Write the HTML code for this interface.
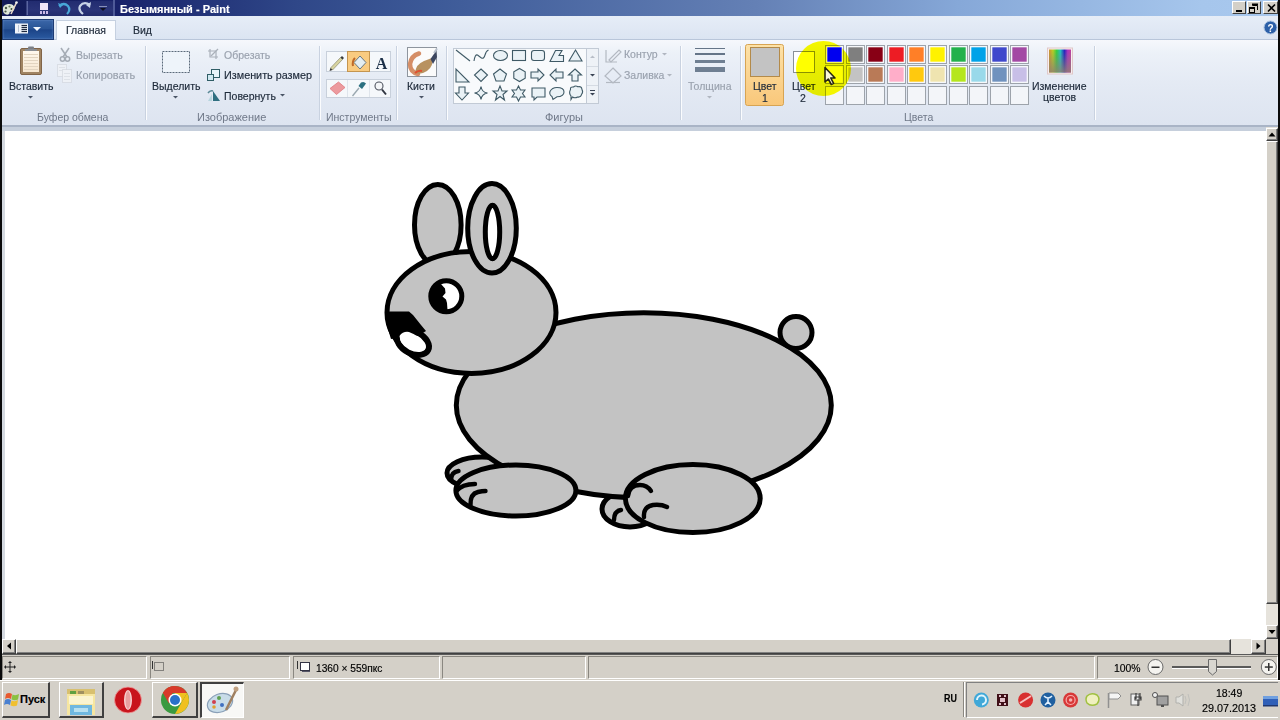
<!DOCTYPE html>
<html><head><meta charset="utf-8">
<style>
*{margin:0;padding:0;box-sizing:border-box}
html,body{width:1280px;height:720px;overflow:hidden;background:#d4d0c8;font-family:"Liberation Sans",sans-serif;}
.a{position:absolute}
.t{position:absolute;font-size:10.5px;line-height:12px;white-space:nowrap;color:#202c3c;-webkit-text-stroke:.15px currentColor}
.g2{color:#9aa2ae}
.rb{background:#d4d0c8;border-top:1px solid #fff;border-left:1px solid #fff;border-right:1px solid #404040;border-bottom:1px solid #404040;box-shadow:inset -1px -1px 0 #808080}
.rb2{background:#d4d0c8;border-top:1px solid #fff;border-left:1px solid #fff;border-right:2px solid #404040;border-bottom:2px solid #404040}
.sp{height:23px;border-top:1px solid #8a8780;border-left:1px solid #8a8780;border-right:1px solid #fff;border-bottom:1px solid #fff}
.sep{width:2px;height:74px;background:linear-gradient(90deg,#c9d2e0 50%,#fbfcfe 50%)}
.lbl{position:absolute;font-size:10.5px;line-height:12px;white-space:nowrap;color:#6f7888}
</style></head><body>
<!-- left/right black strips -->
<div class="a" style="left:0;top:0;width:2px;height:681px;background:#0a0a0a"></div>
<div class="a" style="left:1278px;top:0;width:2px;height:681px;background:#0a0a0a"></div>

<!-- title bar -->
<div class="a" style="left:2px;top:0;width:1276px;height:16px;background:linear-gradient(90deg,#141c58 0%,#18226a 9%,#2f4788 23%,#3d5a98 34%,#6480b5 59%,#86a8d8 75%,#a6c6ec 94%,#a8c8ee 100%)"></div>
<div class="a" style="left:26px;top:1px;width:88px;height:15px;background:linear-gradient(#222c70,#2a3478 60%,#222c6c)"></div>
<div class="a" style="left:26px;top:1px;width:2px;height:14px;background:linear-gradient(90deg,#3a4480 50%,#5a64a0 50%)"></div>
<div class="a" style="left:113px;top:0px;width:2px;height:16px;background:#4e5a98"></div>
<svg class="a" style="left:0;top:0" width="120" height="16">
 <path d="M3 10 Q2 5 8 4 Q14 3.5 14.5 8 Q14.5 11 11 11.5 Q9 11.5 9.5 13.5 Q9 15 6 14.5 Q3 13.5 3 10 Z" fill="#dfe8d8"/>
 <circle cx="6" cy="8" r="1.2" fill="#4a5a48"/><circle cx="9.5" cy="6.5" r="1.1" fill="#6a7a60"/><circle cx="5.5" cy="11.5" r="1.1" fill="#4a5a48"/><circle cx="11.5" cy="9" r="1" fill="#3a4a38"/>
 <path d="M11 14 L16.5 2.5" stroke="#e8d8c8" stroke-width="1.6"/><circle cx="16.5" cy="2.5" r="1.3" fill="#f0f0f0"/>
 <rect x="40" y="3" width="8" height="7" fill="#f0e6fa"/><rect x="40" y="11" width="2" height="3" fill="#c8b8e8"/><rect x="43" y="11" width="2" height="3" fill="#c8b8e8"/><rect x="46" y="11" width="2" height="3" fill="#c8b8e8"/>
 <path d="M59 6 Q64 2 68 6 Q71 10 67 14" stroke="#48a8d8" stroke-width="2.2" fill="none"/><path d="M58 3 L60 8 L63 5 Z" fill="#48a8d8"/>
 <path d="M90 5 Q84 1 80 6 Q78 10 83 14" stroke="#c8d4e8" stroke-width="2.2" fill="none"/><path d="M91 2 L90 8 L86 5 Z" fill="#c8d4e8"/>
 <rect x="99" y="6" width="8" height="1" fill="#8890b8"/><path d="M100 8h6l-3 3z" fill="#101020"/>
</svg>
<div class="t" style="left:120px;top:3px;font-weight:bold;color:#fff;font-size:11px">Безымянный - Paint</div>

<!-- window controls -->
<div class="a" style="left:1232px;top:1px;width:14px;height:13px;background:#d4d0c8;border-top:1px solid #fff;border-left:1px solid #fff;border-right:1px solid #404040;border-bottom:1px solid #404040"></div>
<div class="a" style="left:1247px;top:1px;width:14px;height:13px;background:#d4d0c8;border-top:1px solid #fff;border-left:1px solid #fff;border-right:1px solid #404040;border-bottom:1px solid #404040"></div>
<div class="a" style="left:1263px;top:1px;width:15px;height:13px;background:#d4d0c8;border-top:1px solid #fff;border-left:1px solid #fff;border-right:1px solid #404040;border-bottom:1px solid #404040"></div>

<svg class="a" style="left:1232px;top:1px" width="46" height="14">
 <rect x="4" y="9" width="6" height="2" fill="#000"/>
 <path d="M20.5 4.5h5v4.5" fill="none" stroke="#000" stroke-width="1"/><rect x="20" y="2.5" width="6" height="2" fill="#000"/>
 <rect x="17.5" y="7.5" width="5" height="4" fill="none" stroke="#000" stroke-width="1"/><rect x="17" y="6" width="6" height="2" fill="#000"/>
 <path d="M36 3.5 L43 10.5 M43 3.5 L36 10.5" stroke="#000" stroke-width="1.6"/>
</svg>
<!-- tab row -->
<div class="a" style="left:2px;top:16px;width:1276px;height:24px;background:linear-gradient(#e6edf7,#dbe4f2)"></div>
<div class="a" style="left:2px;top:39px;width:1276px;height:1px;background:#b9c6da"></div>
<div class="a" style="left:2px;top:19px;width:52px;height:21px;background:linear-gradient(#3a66a8,#2a5596 45%,#1c4488 52%,#2a5aa0);border:1px solid #1e3c74;box-shadow:inset 0 0 2px #6a90c8"></div>
<div class="a" style="left:56px;top:20px;width:60px;height:20px;background:#fafcff;border:1px solid #c5d0e0;border-bottom:none"></div>
<div class="t" style="left:66px;top:24px">Главная</div>
<div class="t" style="left:133px;top:24px">Вид</div>
<!-- file button icon -->
<svg class="a" style="left:2px;top:19px" width="52" height="21">
 <rect x="13" y="4.5" width="13" height="10" fill="#f0f4fa"/>
 <g stroke="#1e2a40" stroke-width="1.2"><line x1="19.5" y1="6.5" x2="25" y2="6.5"/><line x1="19.5" y1="8.5" x2="25" y2="8.5"/><line x1="19.5" y1="10.5" x2="25" y2="10.5"/><line x1="19.5" y1="12.5" x2="25" y2="12.5"/></g>
 <g stroke="#b8c4d4" stroke-width="1"><line x1="16.5" y1="6" x2="16.5" y2="13"/></g>
 <path d="M31 8h8l-4 4z" fill="#f4f8ff"/>
</svg>

<!-- ribbon body -->
<div class="a" style="left:2px;top:40px;width:1276px;height:86px;background:linear-gradient(#f6f8fc 0%,#ecf1f8 15%,#e4eaf4 50%,#dde4f0 100%)"></div>
<div class="a" style="left:2px;top:125px;width:1276px;height:2px;background:#a9b4c6"></div>
<div class="a" style="left:2px;top:127px;width:1276px;height:4px;background:#c6cfdc"></div>


<!-- ribbon icons -->
<svg class="a" style="left:0;top:40px" width="1280" height="86" viewBox="0 40 1280 86">
 <defs>
  <linearGradient id="pap" x1="0" y1="0" x2="0" y2="1"><stop offset="0" stop-color="#fff8ee"/><stop offset="1" stop-color="#f6e6cf"/></linearGradient>
  <linearGradient id="rb" x1="0" y1="0" x2="1" y2="0"><stop offset="0" stop-color="#d03010"/><stop offset=".2" stop-color="#f0a000"/><stop offset=".35" stop-color="#40d040"/><stop offset=".55" stop-color="#10a0e0"/><stop offset=".7" stop-color="#2020c0"/><stop offset=".85" stop-color="#b040b0"/><stop offset="1" stop-color="#e04060"/></linearGradient>
  <linearGradient id="rbv" x1="0" y1="0" x2="0" y2="1"><stop offset="0" stop-color="#fff" stop-opacity=".1"/><stop offset="1" stop-color="#808080" stop-opacity=".6"/></linearGradient>
  <linearGradient id="c1" x1="0" y1="0" x2="0" y2="1"><stop offset="0" stop-color="#fde2a8"/><stop offset="1" stop-color="#f9c77a"/></linearGradient>
  <radialGradient id="hl" cx=".5" cy=".5" r=".5"><stop offset="0" stop-color="#ffff00"/><stop offset=".7" stop-color="#f8f400"/><stop offset="1" stop-color="#f4f040" stop-opacity="0"/></radialGradient>
 </defs>
 <!-- clipboard -->
 <rect x="20.5" y="48.5" width="21" height="26" rx="1.5" fill="#a08462" stroke="#806448"/>
 <rect x="23" y="51" width="16" height="21" fill="url(#pap)"/>
 <g stroke="#e2d4c0" stroke-width="1">
  <line x1="24" y1="54.5" x2="38" y2="54.5"/><line x1="24" y1="57.5" x2="38" y2="57.5"/><line x1="24" y1="60.5" x2="38" y2="60.5"/><line x1="24" y1="63.5" x2="38" y2="63.5"/><line x1="24" y1="66.5" x2="38" y2="66.5"/><line x1="24" y1="69.5" x2="38" y2="69.5"/>
 </g>
 <rect x="28" y="46.5" width="6" height="3.5" rx="1" fill="#7b7f86"/><rect x="25" y="49" width="12" height="2" fill="#8a8e94"/>
 <!-- scissors -->
 <g stroke="#a5acb5" stroke-width="1.5" fill="none">
  <line x1="61" y1="48" x2="67" y2="57"/><line x1="69" y1="48" x2="63" y2="57"/>
  <circle cx="62.5" cy="59" r="2.2"/><circle cx="67.5" cy="59" r="2.2"/>
 </g>
 <!-- copy -->
 <g stroke="#c8cdd4" stroke-width="1" fill="#eef1f6" stroke-dasharray="1 1">
  <rect x="57.5" y="64.5" width="9" height="12"/>
  <rect x="62.5" y="69.5" width="9" height="13"/>
 </g>
 <g stroke="#dde1e7" stroke-width="1"><line x1="59" y1="67.5" x2="65" y2="67.5"/><line x1="59" y1="70.5" x2="62" y2="70.5"/><line x1="64" y1="73.5" x2="70" y2="73.5"/><line x1="64" y1="76.5" x2="70" y2="76.5"/><line x1="64" y1="79.5" x2="70" y2="79.5"/></g>
 <!-- select -->
 <rect x="162.5" y="51.5" width="27" height="21" fill="#eef4fa" stroke="#5b6a7a" stroke-dasharray="2 1"/>
 <!-- crop -->
 <g stroke="#a9b0b9" stroke-width="1.2" fill="none"><path d="M210 49v8h8M208 51h8v8"/><line x1="211" y1="56" x2="218" y2="49"/></g>
 <!-- resize -->
 <rect x="211.5" y="69.5" width="8" height="8" fill="#e8f4fa" stroke="#2f5d66"/>
 <rect x="207.5" y="74.5" width="6" height="6" fill="#d0e8f0" stroke="#2f5d66"/>
 <!-- rotate -->
 <path d="M213 91 L220 101 L213 101 Z" fill="#2f6f80"/>
 <path d="M208 93 Q210 90 213 91" stroke="#5a8896" fill="none" stroke-width="1.5"/>
 <path d="M208 101 L212 94 L212 101 Z" fill="#b7d6de"/>
 <!-- tools grid -->
 <rect x="326.5" y="51.5" width="64" height="20" fill="#f5f8fb" stroke="#c8d0db"/>
 <rect x="326.5" y="79.5" width="64" height="18" fill="#f5f8fb" stroke="#c8d0db"/>
 <line x1="347.5" y1="80" x2="347.5" y2="97" stroke="#dfe5ec"/><line x1="369.5" y1="80" x2="369.5" y2="97" stroke="#dfe5ec"/>
 <line x1="369.5" y1="52" x2="369.5" y2="71" stroke="#dfe5ec"/>
 <rect x="347.5" y="51.5" width="22" height="20" fill="#f9cb80" stroke="#c49550"/>
 <!-- pencil -->
 <path d="M330.5 68 L340.5 57.5 L342.5 59.5 L332.5 70 Z" fill="#d8d4a0" stroke="#8a8a70" stroke-width=".7"/>
 <path d="M340.5 57.5 L342 56 L344 58 L342.5 59.5 Z" fill="#3a3a3a"/>
 <path d="M330.5 68 L329.5 71 L332.5 70 Z" fill="#333"/>
 <!-- bucket -->
 <path d="M360 56 L366 62.5 L360 69 L354 62.5 Z" fill="#e4eef2" stroke="#6a7880" stroke-width="1"/>
 <path d="M355 58 Q352 61 353 66" stroke="#c06a28" stroke-width="2" fill="none"/>
 <!-- A -->
 <text x="381.5" y="68.5" font-family="Liberation Serif" font-weight="bold" font-size="16" fill="#1c3048" text-anchor="middle">A</text>
 <!-- eraser -->
 <path d="M330 88.5 L338.5 82 L345 87.5 L336.5 94.5 Z" fill="#ec9a9e" stroke="#e07a80" stroke-width=".8"/>
 <!-- picker -->
 <path d="M361 82.5 Q364 81 366 83.5 L362 89 L358.5 86 Z" fill="#2a6f80"/>
 <line x1="359" y1="88" x2="352.5" y2="96" stroke="#9aa8b0" stroke-width="1.3"/>
 <!-- magnifier -->
 <circle cx="379" cy="86" r="4" fill="#f4f6f8" stroke="#505560" stroke-width="1.1"/>
 <line x1="382" y1="89.5" x2="386" y2="94.5" stroke="#303540" stroke-width="2"/>
 <!-- brushes -->
 <rect x="407.5" y="47.5" width="29" height="29" fill="#fbfbfb" stroke="#8e959e"/>
 <path d="M419 53.5 Q411 56 410 64 Q410 72 418 74" stroke="#c86a36" stroke-width="4.5" fill="none" stroke-linecap="round" opacity=".75"/>
 <path d="M415 73 Q416 64 424 61 L432 58 Q434 66 427 71 Q421 75 415 73 Z" fill="#b89260"/>
 <path d="M415 73 Q418 70 422 71" stroke="#e05030" stroke-width="2" fill="none"/>
 <path d="M430.5 59 L436 51 L437 57 L433 64 Z" fill="#3c4660"/>
 <path d="M434 53 L437 48.5" stroke="#b8c0cc" stroke-width="2"/>
 <!-- arrows -->
 <g fill="#4a5566">
  <path d="M28 96h5l-2.5 2.5z"/><path d="M173 96h5l-2.5 2.5z"/><path d="M280 94h5l-2.5 2.5z"/>
  <path d="M419 96h5l-2.5 2.5z"/>
 </g>
 <g fill="#b0b6c0"><path d="M707 96h5l-2.5 2.5z"/><path d="M662 53h5l-2.5 2.5z"/><path d="M667 74h5l-2.5 2.5z"/></g>
 <!-- shapes gallery -->
 <rect x="453.5" y="48.5" width="145" height="55" fill="#f8fafc" stroke="#c2cad5"/>
 <rect x="586.5" y="48.5" width="12" height="55" fill="#eef2f7" stroke="#c2cad5"/>
 <line x1="587" y1="66.5" x2="598" y2="66.5" stroke="#d5dbe3"/><line x1="587" y1="85.5" x2="598" y2="85.5" stroke="#d5dbe3"/>
 <path d="M590 58h5l-2.5-2.5z" fill="#b8bec8"/>
 <path d="M590 74h5l-2.5 2.5z" fill="#3a4455"/>
 <path d="M590 93h5l-2.5 2.5z" fill="#3a4455"/><line x1="590" y1="90.5" x2="595" y2="90.5" stroke="#3a4455"/>
 <g stroke="#3f5a66" stroke-width="1.1" fill="#eaf2f6">
  <line x1="456" y1="50" x2="470" y2="61" fill="none"/>
  <path d="M474 61 Q475 54 477.5 55 Q480 57 481.5 58 Q484 59 485 55 Q486 51 488.5 50" fill="none"/>
  <ellipse cx="500.5" cy="55.5" rx="7" ry="5"/>
  <rect x="512.5" y="50.5" width="13" height="10"/>
  <rect x="531.5" y="50.5" width="13" height="10" rx="2.5"/>
  <path d="M550 61.5 L555.5 50.5 L562 50.5 L559 55.5 L563.5 55.5 L563.5 61.5 Z"/>
  <path d="M575.5 50 L582 61 L569 61 Z"/>
  <path d="M456 69 L456 82 L469 82 Z"/>
  <path d="M481 69 L487.5 75 L481 81.5 L474.5 75 Z"/>
  <path d="M500 69 L506.5 74 L504 81 L496 81 L493.5 74 Z"/>
  <path d="M519.5 68.5 L525.2 71.8 L525.2 78.2 L519.5 81.5 L513.8 78.2 L513.8 71.8 Z"/>
  <path d="M531 72 L538 72 L538 69 L544 75 L538 81 L538 78 L531 78 Z"/>
  <path d="M563 72 L556 72 L556 69 L550 75 L556 81 L556 78 L563 78 Z"/>
  <path d="M575 69 L581.5 75 L578 75 L578 81 L572 81 L572 75 L568.5 75 Z"/>
  <path d="M459 87 L465 87 L465 93 L468.5 93 L462 100 L455.5 93 L459 93 Z"/>
  <path d="M481 86.5 Q481.8 92.2 487.5 93 Q481.8 93.8 481 99.5 Q480.2 93.8 474.5 93 Q480.2 92.2 481 86.5 Z"/>
  <path d="M500 86 L502 91 L507 91 L503 94.5 L504.5 100 L500 96.5 L495.5 100 L497 94.5 L493 91 L498 91 Z"/>
  <path d="M518.5 86 L520.5 90 L525 90 L522.5 93.5 L525 97 L520.5 97 L518.5 101 L516.5 97 L512 97 L514.5 93.5 L512 90 L516.5 90 Z"/>
  <path d="M532 88 h13 v9 h-8 l-3 3 v-3 h-2 z" />
  <path d="M552 96.5 Q549 94.5 550 91.5 Q552 87.5 557 87.5 Q564 87.5 564 92 Q564 96.5 557 96.8 L553 99.5 Z"/>
  <path d="M570.5 89.5 Q570 86.5 573.5 87 Q575.5 85 578 86.8 Q581.5 86 582 89.5 Q583.5 92 581.5 94.5 Q581 97.5 577.5 97 Q575 98.5 572.5 97 L571 99.5 L571 96 Q568.5 93 570.5 89.5 Z"/>
 </g>
 <!-- outline / fill -->
 <g stroke="#b3b9c2" stroke-width="1.2" fill="none">
  <path d="M606 50 L606 62 L617 62"/><path d="M609 60 L619 50 L621 52 L611 62 Z"/>
  <path d="M613 68 L621 76 L613 83 L605 76 Z"/><line x1="606" y1="82.5" x2="620" y2="82.5"/>
 </g>
 <!-- thickness -->
 <rect x="695" y="48" width="30" height="1" fill="#657588"/>
 <rect x="695" y="53" width="30" height="2" fill="#657588"/>
 <rect x="695" y="60" width="30" height="3" fill="#6f7f92"/>
 <rect x="695" y="67" width="30" height="5" fill="#6f7f92"/>
 <!-- color1 -->
 <rect x="745.5" y="44.5" width="38" height="61" rx="2" fill="url(#c1)" stroke="#d7a453"/>
 <rect x="750.5" y="47.5" width="29" height="29" fill="#c3c3c3" stroke="#b38a4a"/>
 <!-- color2 -->
 <rect x="793.5" y="51.5" width="21" height="21" fill="#fff" stroke="#8a9098"/>
</svg>

<!-- palette -->
<svg class="a" style="left:0;top:40px" width="1280" height="86" viewBox="0 40 1280 86">
 <defs>
  <linearGradient id="rb2" x1="0" y1="0" x2="1" y2="0"><stop offset="0" stop-color="#d09030"/><stop offset=".18" stop-color="#b8d020"/><stop offset=".35" stop-color="#30d040"/><stop offset=".52" stop-color="#20c0c0"/><stop offset=".7" stop-color="#2020c0"/><stop offset=".85" stop-color="#b030c0"/><stop offset="1" stop-color="#c040a0"/></linearGradient>
  <linearGradient id="gv" x1="0" y1="0" x2="0" y2="1"><stop offset="0" stop-color="#808080" stop-opacity="0"/><stop offset="1" stop-color="#908070" stop-opacity=".85"/></linearGradient>
  <radialGradient id="hl2" cx=".5" cy=".5" r=".5"><stop offset="0" stop-color="#ffff00"/><stop offset=".75" stop-color="#ffff00"/><stop offset="1" stop-color="#ffff00" stop-opacity="0"/></radialGradient>
 </defs>
 <rect x="825.5" y="45.5" width="18" height="18" fill="#f3f5f9" stroke="#9da3ab"/>
 <rect x="827" y="47" width="15" height="15" fill="#0000f0" stroke="#fff" stroke-width=".6"/>
 <rect x="846.5" y="45.5" width="18" height="18" fill="#f3f5f9" stroke="#9da3ab"/>
 <rect x="848" y="47" width="15" height="15" fill="#7f7f7f" stroke="#fff" stroke-width=".6"/>
 <rect x="866.5" y="45.5" width="18" height="18" fill="#f3f5f9" stroke="#9da3ab"/>
 <rect x="868" y="47" width="15" height="15" fill="#880015" stroke="#fff" stroke-width=".6"/>
 <rect x="887.5" y="45.5" width="18" height="18" fill="#f3f5f9" stroke="#9da3ab"/>
 <rect x="889" y="47" width="15" height="15" fill="#ed1c24" stroke="#fff" stroke-width=".6"/>
 <rect x="907.5" y="45.5" width="18" height="18" fill="#f3f5f9" stroke="#9da3ab"/>
 <rect x="909" y="47" width="15" height="15" fill="#ff7f27" stroke="#fff" stroke-width=".6"/>
 <rect x="928.5" y="45.5" width="18" height="18" fill="#f3f5f9" stroke="#9da3ab"/>
 <rect x="930" y="47" width="15" height="15" fill="#fff200" stroke="#fff" stroke-width=".6"/>
 <rect x="949.5" y="45.5" width="18" height="18" fill="#f3f5f9" stroke="#9da3ab"/>
 <rect x="951" y="47" width="15" height="15" fill="#22b14c" stroke="#fff" stroke-width=".6"/>
 <rect x="969.5" y="45.5" width="18" height="18" fill="#f3f5f9" stroke="#9da3ab"/>
 <rect x="971" y="47" width="15" height="15" fill="#00a2e8" stroke="#fff" stroke-width=".6"/>
 <rect x="990.5" y="45.5" width="18" height="18" fill="#f3f5f9" stroke="#9da3ab"/>
 <rect x="992" y="47" width="15" height="15" fill="#3f48cc" stroke="#fff" stroke-width=".6"/>
 <rect x="1010.5" y="45.5" width="18" height="18" fill="#f3f5f9" stroke="#9da3ab"/>
 <rect x="1012" y="47" width="15" height="15" fill="#a349a4" stroke="#fff" stroke-width=".6"/>
 <rect x="825.5" y="65.5" width="18" height="18" fill="#f3f5f9" stroke="#9da3ab"/>
 <rect x="827" y="67" width="15" height="15" fill="#ffffff" stroke="#fff" stroke-width=".6"/>
 <rect x="846.5" y="65.5" width="18" height="18" fill="#f3f5f9" stroke="#9da3ab"/>
 <rect x="848" y="67" width="15" height="15" fill="#c3c3c3" stroke="#fff" stroke-width=".6"/>
 <rect x="866.5" y="65.5" width="18" height="18" fill="#f3f5f9" stroke="#9da3ab"/>
 <rect x="868" y="67" width="15" height="15" fill="#b97a57" stroke="#fff" stroke-width=".6"/>
 <rect x="887.5" y="65.5" width="18" height="18" fill="#f3f5f9" stroke="#9da3ab"/>
 <rect x="889" y="67" width="15" height="15" fill="#ffaec9" stroke="#fff" stroke-width=".6"/>
 <rect x="907.5" y="65.5" width="18" height="18" fill="#f3f5f9" stroke="#9da3ab"/>
 <rect x="909" y="67" width="15" height="15" fill="#ffc90e" stroke="#fff" stroke-width=".6"/>
 <rect x="928.5" y="65.5" width="18" height="18" fill="#f3f5f9" stroke="#9da3ab"/>
 <rect x="930" y="67" width="15" height="15" fill="#efe4b0" stroke="#fff" stroke-width=".6"/>
 <rect x="949.5" y="65.5" width="18" height="18" fill="#f3f5f9" stroke="#9da3ab"/>
 <rect x="951" y="67" width="15" height="15" fill="#b5e61d" stroke="#fff" stroke-width=".6"/>
 <rect x="969.5" y="65.5" width="18" height="18" fill="#f3f5f9" stroke="#9da3ab"/>
 <rect x="971" y="67" width="15" height="15" fill="#99d9ea" stroke="#fff" stroke-width=".6"/>
 <rect x="990.5" y="65.5" width="18" height="18" fill="#f3f5f9" stroke="#9da3ab"/>
 <rect x="992" y="67" width="15" height="15" fill="#7092be" stroke="#fff" stroke-width=".6"/>
 <rect x="1010.5" y="65.5" width="18" height="18" fill="#f3f5f9" stroke="#9da3ab"/>
 <rect x="1012" y="67" width="15" height="15" fill="#c8bfe7" stroke="#fff" stroke-width=".6"/>
 <rect x="825.5" y="86.5" width="18" height="18" fill="#f3f5f9" stroke="#9da3ab"/>
 <rect x="846.5" y="86.5" width="18" height="18" fill="#f3f5f9" stroke="#9da3ab"/>
 <rect x="866.5" y="86.5" width="18" height="18" fill="#f3f5f9" stroke="#9da3ab"/>
 <rect x="887.5" y="86.5" width="18" height="18" fill="#f3f5f9" stroke="#9da3ab"/>
 <rect x="907.5" y="86.5" width="18" height="18" fill="#f3f5f9" stroke="#9da3ab"/>
 <rect x="928.5" y="86.5" width="18" height="18" fill="#f3f5f9" stroke="#9da3ab"/>
 <rect x="949.5" y="86.5" width="18" height="18" fill="#f3f5f9" stroke="#9da3ab"/>
 <rect x="969.5" y="86.5" width="18" height="18" fill="#f3f5f9" stroke="#9da3ab"/>
 <rect x="990.5" y="86.5" width="18" height="18" fill="#f3f5f9" stroke="#9da3ab"/>
 <rect x="1010.5" y="86.5" width="18" height="18" fill="#f3f5f9" stroke="#9da3ab"/>
 <rect x="1047.5" y="48" width="25" height="26" fill="#f8f0f0" stroke="#e0c8c8"/>
 <rect x="1049" y="49.5" width="22" height="23" fill="url(#rb2)"/>
 <rect x="1049" y="49.5" width="22" height="23" fill="url(#gv)"/>
 </svg>
<svg class="a" style="left:1263px;top:20px" width="15" height="15">
 <circle cx="7.5" cy="7.5" r="6.5" fill="#2b5fa8" stroke="#a8c0e0" stroke-width="1"/>
 <text x="7.5" y="11.5" font-family="Liberation Sans" font-weight="bold" font-size="10" fill="#fff" text-anchor="middle">?</text>
</svg>

<!-- ribbon labels -->
<div class="t" style="left:9px;top:80px">Вставить</div>
<div class="t g2" style="left:76px;top:48.5px">Вырезать</div>
<div class="t g2" style="left:76px;top:69px;font-size:11px">Копировать</div>
<div class="lbl" style="left:37px;top:111px">Буфер обмена</div>
<div class="a sep" style="left:145px;top:46px"></div>

<div class="t" style="left:152px;top:80px">Выделить</div>
<div class="t g2" style="left:224px;top:49px">Обрезать</div>
<div class="t" style="left:224px;top:69px;font-size:10.8px">Изменить размер</div>
<div class="t" style="left:224px;top:90px">Повернуть</div>
<div class="lbl" style="left:197px;top:111px;font-size:11px">Изображение</div>
<div class="a sep" style="left:319px;top:46px"></div>

<div class="lbl" style="left:326px;top:111px">Инструменты</div>
<div class="a sep" style="left:396px;top:46px"></div>
<div class="t" style="left:407px;top:80px">Кисти</div>
<div class="a sep" style="left:446px;top:46px"></div>

<div class="t g2" style="left:624px;top:48px">Контур</div>
<div class="t g2" style="left:624px;top:69px">Заливка</div>
<div class="lbl" style="left:545px;top:111px;font-size:11px">Фигуры</div>
<div class="a sep" style="left:680px;top:46px"></div>
<div class="t g2" style="left:688px;top:80px">Толщина</div>
<div class="a sep" style="left:740px;top:46px"></div>

<div class="t" style="left:753px;top:80px">Цвет</div>
<div class="t" style="left:762px;top:92px">1</div>
<div class="t" style="left:792px;top:80px">Цвет</div>
<div class="t" style="left:800px;top:92px">2</div>
<div class="lbl" style="left:904px;top:111px">Цвета</div>
<div class="t" style="left:1032px;top:80px">Изменение</div>
<div class="t" style="left:1043px;top:91px">цветов</div>
<div class="a sep" style="left:1094px;top:46px"></div>



<!-- highlight -->
<div class="a" style="left:796px;top:41px;width:55px;height:55px;border-radius:50%;background:radial-gradient(circle,#ffff00 0%,#ffff00 72%,rgba(255,255,0,0) 100%);mix-blend-mode:multiply"></div>
<svg class="a" style="left:0;top:40px" width="1280" height="86" viewBox="0 40 1280 86">
 <rect x="827" y="47" width="15" height="15" fill="#0000f0" stroke="#fff" stroke-width=".6"/>
 <path d="M825 67.5 L825 82 L828.3 79 L831.3 84.5 L833.6 83.4 L830.8 78 L835 78 Z" fill="#fbf8d8" stroke="#2a2810" stroke-width="1.6" stroke-linejoin="round"/>
</svg>

<!-- canvas area -->
<div class="a" style="left:2px;top:131px;width:3px;height:508px;background:#d4d9e0"></div>
<div class="a" style="left:5px;top:131px;width:1261px;height:508px;background:#fff"></div>

<!-- bunny -->
<svg class="a" style="left:0;top:0" width="1280" height="720">
 <g stroke="#000" stroke-width="5" fill="#c3c3c3">
  <!-- back paws -->
  <ellipse cx="482" cy="473" rx="35" ry="16"/>
  <ellipse cx="630" cy="509" rx="28" ry="18"/>
  <!-- body -->
  <ellipse cx="643.8" cy="405.3" rx="187.5" ry="92.5"/>
  <!-- tail -->
  <circle cx="796" cy="332.5" r="16"/>
  <!-- left ear -->
  <ellipse cx="437.8" cy="225" rx="23.3" ry="40.5"/>
  <!-- head -->
  <ellipse cx="471.5" cy="312.4" rx="84.5" ry="61"/>
  <!-- right ear -->
  <ellipse cx="492" cy="228.3" rx="24.3" ry="44.7"/>
  <ellipse cx="492.5" cy="232" rx="7.2" ry="26.8" fill="#fff"/>
  <!-- legs -->
  <ellipse cx="515.9" cy="490.5" rx="60" ry="25.5"/>
  <ellipse cx="692.8" cy="498.6" rx="67.4" ry="34"/>
 </g>
 <!-- eye -->
 <circle cx="446.3" cy="296.2" r="15.5" fill="#fff" stroke="#000" stroke-width="5"/>
 <path d="M446.3 280.7 A15.5 15.5 0 0 0 446.3 311.7 L447.5 310 L447 303 L446 299.5 L442.5 296.5 L445.5 293 L445 288.5 L440.5 283.5 Z" fill="#000"/>
 <!-- nose & mouth -->
 <ellipse cx="413" cy="342.5" rx="17" ry="11" transform="rotate(27 413 342.5)" fill="#fff" stroke="#000" stroke-width="6"/>
 <path d="M386 311.5 L409 311.5 L413 315 L417 320 L421 325 L426 331 L418 336 L405 334 L397 338 L391 339 L387 326 Z" fill="#000"/>
 <path d="M399.5 336 Q403 331 409 332 Q420 336 425 344 Q427 350 421 351 Q412 351 405 346 Q400 342 399.5 336 Z" fill="#fff"/>
 <!-- toes -->
 <g stroke="#000" stroke-width="4.4" fill="none" stroke-linecap="round">
  <path d="M451 480 Q451 472 458.5 471"/>
  <path d="M456.5 491 Q462 484 475 484"/>
  <path d="M470.5 505 Q470 494 478 492 Q482 491 485.5 491"/>
  <path d="M614 520 Q614 511 621 510"/>
  <path d="M628 496 Q629 485 640 485 Q647 485 651 491"/>
  <path d="M644 517 Q643 507 653 505 Q661 504 667 507"/>
 </g>
</svg>

<!-- vertical scrollbar -->
<div class="a" style="left:1266px;top:127px;width:12px;height:512px;background:#e6e3dc"></div>
<div class="a rb" style="left:1266px;top:128px;width:12px;height:13px"></div>
<svg class="a" style="left:1266px;top:128px" width="12" height="13"><path d="M2.5 8.5h7l-3.5-4z" fill="#000"/></svg>
<div class="a rb" style="left:1266px;top:141px;width:12px;height:463px"></div>
<div class="a rb" style="left:1266px;top:625px;width:12px;height:14px"></div>
<svg class="a" style="left:1266px;top:625px" width="12" height="14"><path d="M2.5 5h7l-3.5 4z" fill="#000"/></svg>

<!-- horizontal scrollbar -->
<div class="a" style="left:2px;top:639px;width:1264px;height:15px;background:#e6e3dc"></div>
<div class="a rb" style="left:2px;top:639px;width:14px;height:15px"></div>
<svg class="a" style="left:2px;top:639px" width="14" height="15"><path d="M9 3.5v7l-4-3.5z" fill="#000"/></svg>
<div class="a rb" style="left:16px;top:639px;width:1215px;height:15px"></div>
<div class="a rb" style="left:1251px;top:639px;width:15px;height:15px"></div>
<svg class="a" style="left:1251px;top:639px" width="15" height="15"><path d="M5.5 3.5v7l4-3.5z" fill="#000"/></svg>
<div class="a" style="left:1266px;top:639px;width:12px;height:15px;background:#d4d0c8"></div>

<!-- status bar -->
<div class="a" style="left:2px;top:654px;width:1276px;height:26px;background:#d4d0c8;border-top:1px solid #5a5a5a"></div>
<div class="a sp" style="left:2px;top:656px;width:145px"></div>
<div class="a sp" style="left:150px;top:656px;width:140px"></div>
<div class="a sp" style="left:293px;top:656px;width:147px"></div>
<div class="a sp" style="left:442px;top:656px;width:144px"></div>
<div class="a sp" style="left:588px;top:656px;width:507px"></div>
<div class="a sp" style="left:1097px;top:656px;width:181px"></div>
<svg class="a" style="left:0;top:654px" width="400" height="26">
 <g fill="#222"><rect x="9.5" y="8" width="1" height="10"/><rect x="5" y="12.5" width="10" height="1"/><path d="M10 7l-2 2h4z M10 19l-2-2h4z M4 13l2-2v4z M16 13l-2-2v4z"/></g>
 <g fill="none" stroke="#333" stroke-width="1"><rect x="154.5" y="8.5" width="9" height="8" stroke-dasharray="1 1"/><line x1="152.5" y1="7" x2="152.5" y2="15"/></g>
 <g><rect x="300.5" y="8.5" width="9" height="8" fill="#fff" stroke="#334"/><line x1="297.5" y1="7" x2="297.5" y2="15" stroke="#333"/><rect x="302" y="17" width="8" height="1" fill="#556"/></g>
</svg>
<div class="t" style="left:316px;top:663px;font-size:10.2px;color:#000">1360 × 559пкс</div>
<div class="t" style="left:1114px;top:662.5px;font-size:10.4px;color:#000">100%</div>
<svg class="a" style="left:1140px;top:654px" width="140" height="26">
 <circle cx="15.5" cy="13" r="7.5" fill="#f4f3ef" stroke="#6a6a6a"/><rect x="11.5" y="12.5" width="8" height="1.5" fill="#333"/>
 <rect x="32" y="12" width="79" height="2" fill="#5a5a5a"/><rect x="32" y="14" width="79" height="1" fill="#fff"/>
 <path d="M68.5 5.5h8v12l-4 3.5l-4-3.5z" fill="#d8d6d0" stroke="#6a6a6a"/>
 <circle cx="128.8" cy="13" r="7.5" fill="#f4f3ef" stroke="#6a6a6a"/><rect x="124.8" y="12.3" width="8" height="1.5" fill="#333"/><rect x="128" y="9" width="1.5" height="8" fill="#333"/>
</svg>

<!-- taskbar -->
<div class="a" style="left:0;top:680px;width:1280px;height:40px;background:#d4d0c8;border-top:1px solid #fff"></div>
<div class="a rb2" style="left:2px;top:682px;width:48px;height:36px"></div>
<div class="t" style="left:20px;top:693px;font-size:11px;font-weight:bold;color:#000">Пуск</div>
<svg class="a" style="left:4px;top:691px" width="16" height="17">
 <path d="M2 3 Q5 1 8 3 L7 8 Q4 6 1 8 Z" fill="#e85a30"/><path d="M8.5 3.5 Q11.5 5 15 3 L14 8.5 Q11 10 7.5 8.5 Z" fill="#8ac040"/>
 <path d="M1 9 Q4 7 7 9 L6 14 Q3 12 0 14 Z" fill="#4a80d0"/><path d="M7.5 9.5 Q11 11 14 9 L13 14.5 Q10 16 6.5 14.5 Z" fill="#f0c030"/>
</svg>
<div class="a rb2" style="left:59px;top:682px;width:45px;height:36px"></div>
<svg class="a" style="left:59px;top:682px" width="45" height="36">
 <rect x="8" y="7" width="28" height="26" fill="#f6e6a0"/><rect x="8" y="7" width="28" height="5" fill="#d8c070"/>
 <rect x="11" y="9" width="6" height="3" fill="#60a040"/><rect x="19" y="9" width="6" height="3" fill="#a09060"/>
 <rect x="10" y="14" width="24" height="8" fill="#fbf4d0"/>
 <rect x="11" y="23" width="22" height="10" fill="#70b8e0"/><rect x="15" y="26" width="14" height="4" fill="#b8e0f0"/>
</svg>
<svg class="a" style="left:112px;top:685px" width="32" height="30">
 <ellipse cx="16" cy="15" rx="13.5" ry="13" fill="#c8141c"/>
 <ellipse cx="16" cy="15" rx="13.5" ry="13" fill="none" stroke="#f0a0a0" stroke-width=".8"/>
 <ellipse cx="16" cy="15" rx="4" ry="10" fill="#f8d0d0"/><ellipse cx="16" cy="15" rx="2.5" ry="9" fill="#e8a0a0"/>
</svg>
<div class="a rb2" style="left:152px;top:682px;width:46px;height:36px"></div>
<svg class="a" style="left:152px;top:682px" width="46" height="36">
 <circle cx="23" cy="18" r="14" fill="#3a9a40"/>
 <path d="M23 4 A14 14 0 0 1 35.1 11 L23 11 Z M10.9 11 A14 14 0 0 1 23 4 L23 11 Z" fill="#d83a2a"/>
 <path d="M23 4 A14 14 0 0 0 10.9 11 L17 21.5 Z" fill="#d83a2a"/>
 <path d="M35.1 11 A14 14 0 0 1 23 32 L29 21.5 Z" fill="#f0c020"/>
 <path d="M35.1 11 L23 11 L29 21.5 Z" fill="#f0c020"/>
 <circle cx="23" cy="18" r="6.5" fill="#fff"/><circle cx="23" cy="18" r="5" fill="#2a70c8"/>
</svg>
<div class="a" style="left:200px;top:682px;width:44px;height:36px;background:#f8f8f6;border-top:2px solid #404040;border-left:2px solid #404040;border-right:1px solid #fff;border-bottom:1px solid #fff"></div>
<svg class="a" style="left:200px;top:682px" width="44" height="36">
 <ellipse cx="20" cy="21" rx="13" ry="9" fill="#c8dce8" stroke="#8aa0b8" stroke-width="1.2" transform="rotate(-20 20 21)"/>
 <circle cx="14" cy="20" r="2" fill="#d04050"/><circle cx="19" cy="16" r="2" fill="#60a050"/><circle cx="22" cy="23" r="2" fill="#4070c0"/><circle cx="14" cy="25" r="1.8" fill="#e0a030"/>
 <line x1="26" y1="28" x2="36" y2="8" stroke="#a08060" stroke-width="2.5"/>
 <circle cx="36" cy="7" r="2.5" fill="#c0a080"/>
</svg>

<div class="t" style="left:944px;top:692px;font-size:10.5px;color:#000;font-weight:bold;transform:scaleX(.85);transform-origin:left">RU</div>
<div class="a" style="left:963px;top:682px;width:2px;height:35px;background:linear-gradient(90deg,#8a8780 50%,#fff 50%)"></div>
<div class="a" style="left:966px;top:682px;width:312px;height:36px;border-top:1px solid #808080;border-left:1px solid #808080;border-bottom:1px solid #fff"></div>
<svg class="a" style="left:960px;top:682px" width="320" height="36">
 <circle cx="21.3" cy="18" r="7.5" fill="#40a8d8"/><path d="M17 18 A4.5 4.5 0 1 1 22 22.5" stroke="#e0f4fc" stroke-width="2" fill="none"/>
 <rect x="37" y="12" width="11" height="12" fill="#401018"/><g fill="#e0c0c8"><rect x="39" y="13" width="2" height="2"/><rect x="44" y="13" width="2" height="2"/><rect x="39" y="21" width="2" height="2"/><rect x="44" y="21" width="2" height="2"/><rect x="40" y="16" width="5" height="4"/></g>
 <circle cx="65.6" cy="18" r="7.5" fill="#d83030"/><path d="M60 21 L71 14" stroke="#f8c0c0" stroke-width="2"/>
 <circle cx="88" cy="18" r="7.5" fill="#2060a0"/><path d="M84 14 Q88 18 92 14 M88 16v6 M85 23 L88 20 L91 23" stroke="#e0f0ff" stroke-width="1.6" fill="none"/>
 <circle cx="110.6" cy="18" r="7.5" fill="#d83838"/><circle cx="110.6" cy="18" r="4.5" fill="none" stroke="#f8b0b0" stroke-width="1.2"/><circle cx="110.6" cy="18" r="1.8" fill="#f8b0b0"/>
 <path d="M127 14 Q131 10 137 13 Q141 17 137 22 Q131 25 127 21 Q125 17 127 14 Z" fill="#f0f0c0" stroke="#a0c040" stroke-width="1.5"/>
 <path d="M148.5 11v15" stroke="#909090" stroke-width="1.5"/><path d="M149 11 h9 l3 3 l-3 3 h-9 z" fill="#f4f4f4" stroke="#909090"/>
 <rect x="171" y="12" width="8" height="11" fill="#f0f0f0" stroke="#606060"/><path d="M176 11v6 M180 11v6 M175 15h6v3h-6z M178 18v6" stroke="#404040" stroke-width="1.2" fill="none"/>
 <rect x="197" y="14" width="11" height="9" fill="#a0a0a0" stroke="#505050"/><rect x="201" y="23" width="3" height="2" fill="#505050"/><circle cx="195" cy="13" r="2.5" fill="#f0f0f0" stroke="#505050"/>
 <path d="M216 15h3l4-3v12l-4-3h-3z" fill="#e0e0dc" stroke="#b0b0ac"/><path d="M225 14q2 4 0 8 M228 12q3 6 0 12" stroke="#c0c0bc" fill="none"/>
</svg>
<div class="t" style="left:1216px;top:687px;font-size:10.5px;color:#000">18:49</div>
<div class="t" style="left:1202px;top:702px;font-size:10.8px;color:#000">29.07.2013</div>
<svg class="a" style="left:1262px;top:694px" width="16" height="14"><rect x="1" y="2" width="15" height="10" fill="#3060b8"/><rect x="1" y="2" width="15" height="3" fill="#70a0e0"/><rect x="1" y="11" width="15" height="1.5" fill="#203870"/></svg>
</body></html>
